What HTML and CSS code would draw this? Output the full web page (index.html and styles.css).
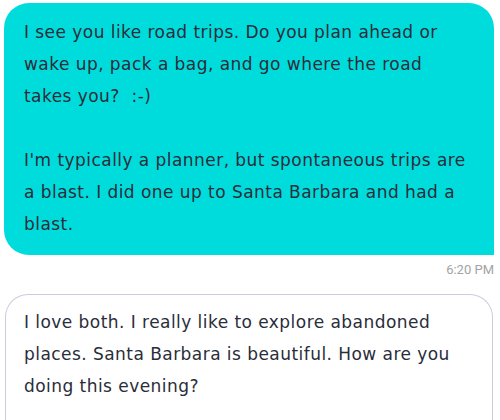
FILE: index.html
```html
<!DOCTYPE html>
<html>
<head>
<meta charset="utf-8">
<link rel="stylesheet" href="styles.css">
</head>
<body>
<div class="chat">
  <div class="bubble sent">
    <p>I see you like road trips. Do you plan ahead or wake up, pack a bag, and go where the road takes you?&nbsp; :-)</p>
    <p>I'm typically a planner, but spontaneous trips are a blast. I did one up to Santa Barbara and had a blast.</p>
  </div>
  <div class="time">6:20 PM</div>
  <div class="bubble received">
    <p>I love both. I really like to explore abandoned places. Santa Barbara is beautiful. How are you doing this evening?</p>
  </div>
</div>
</body>
</html>
```

FILE: styles.css
```css
html, body {
  margin: 0;
  padding: 0;
  background: #ffffff;
}
.chat {
  display: flex;
  flex-direction: column;
  padding: 3px 6px 0 4px;
}
.bubble {
  font-family: "DejaVu Sans", sans-serif;
  font-size: 17px;
  letter-spacing: 0.45px;
  line-height: 32px;
  color: #2a2d3a;
  display: flex;
  flex-direction: column;
  gap: 32px;
}
.bubble p {
  margin: 0;
}
.sent {
  background: #00dcdc;
  border-radius: 25px 25px 0 25px;
  padding: 13px 20px 15px 20px;
}
.time {
  font-family: Roboto, "Liberation Sans", Arial, sans-serif;
  font-size: 13px;
  color: #a3a3a3;
  text-align: right;
  margin-top: 8px;
  line-height: 14px;
}
.received {
  margin-top: 17px;
  margin-left: 1px;
  margin-right: 1px;
  border: 1px solid #c9ceda;
  border-bottom: none;
  border-radius: 23px 23px 0 0;
  padding: 11px 19px 30px 18px;
}
```
